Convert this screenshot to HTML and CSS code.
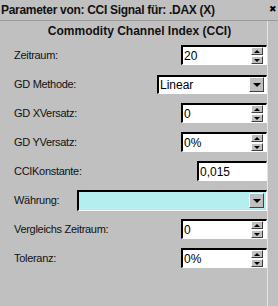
FILE: index.html
```html
<!DOCTYPE html>
<html lang="de">
<head>
  <meta charset="UTF-8">
  <title>Parameter</title>
  <link rel="stylesheet" href="styles.css">
</head>
<body>

  <div class="dialog">
    <div class="titlebar">
      <span class="title">Parameter von: CCI Signal für: .DAX (X)</span>
      <span class="close">&#x2716;</span>
    </div>

    <div class="panel">
      <h1>Commodity Channel Index (CCI)</h1>

      <div class="rows">
        <div class="row">
          <label>Zeitraum:</label>
          <div class="field spin"><span class="value">20</span><span class="spinner"><i class="up"></i><i class="down"></i></span></div>
        </div>
        <div class="row">
          <label>GD Methode:</label>
          <div class="field combo method"><span class="value">Linear</span><span class="drop"><i class="down"></i></span></div>
        </div>
        <div class="row">
          <label>GD XVersatz:</label>
          <div class="field spin"><span class="value">0</span><span class="spinner"><i class="up"></i><i class="down"></i></span></div>
        </div>
        <div class="row">
          <label>GD YVersatz:</label>
          <div class="field spin"><span class="value">0%</span><span class="spinner"><i class="up"></i><i class="down"></i></span></div>
        </div>
        <div class="row">
          <label>CCIKonstante:</label>
          <div class="field text"><span class="value">0,015</span></div>
        </div>
        <div class="row">
          <label>Währung:</label>
          <div class="field combo currency"><span class="value"></span><span class="drop"><i class="down"></i></span></div>
        </div>
        <div class="row">
          <label>Vergleichs Zeitraum:</label>
          <div class="field spin"><span class="value">0</span><span class="spinner"><i class="up"></i><i class="down"></i></span></div>
        </div>
        <div class="row">
          <label>Toleranz:</label>
          <div class="field spin"><span class="value">0%</span><span class="spinner"><i class="up"></i><i class="down"></i></span></div>
        </div>
      </div>
    </div>
  </div>

</body>
</html>
```

FILE: styles.css
```css
body {
  margin: 0;
  background-color: #c0c0c0;
  font-family: 'Liberation Sans', Arial, sans-serif;
  font-size: 11px;
  color: #111;
}
.dialog {
  width: 278px;
  height: 306px;
  overflow: hidden;
}
.titlebar {
  height: 20px;
  display: flex;
  justify-content: space-between;
  align-items: center;
  border-bottom: 1px solid #9a9a9a;
  padding-left: 1px;
}
.title {
  font-weight: bold;
  font-size: 12px;
  letter-spacing: -0.3px;
}
.close {
  font-size: 9px;
  margin-top: -3px;
  margin-right: 1px;
  color: #000;
}
.panel {
  width: 267px;
  border-right: 1px solid #e4e4e4;
  height: 285px;
}
h1 {
  margin: 0;
  height: 24px;
  line-height: 20px;
  font-size: 12px;
  text-align: center;
  padding-left: 12px;
}
.rows {
  display: flex;
  flex-direction: column;
  gap: 9px;
  padding-left: 14px;
}
.row {
  height: 20px;
  display: flex;
  justify-content: space-between;
  align-items: center;
}
label {
  letter-spacing: -0.3px;
}
.field {
  height: 20px;
  box-sizing: border-box;
  border-style: solid;
  border-width: 2px 1px 1px 2px;
  border-color: #000 #fff #fff #000;
  background-color: #fff;
  display: flex;
  align-items: center;
  font-size: 12px;
  color: #000;
}
.value {
  flex: 1;
  padding-left: 1px;
}
.spin { width: 86px; }
.text { width: 70px; }
.method { width: 110px; height: 19px; }
.currency { width: 190px; height: 21px; background-color: #b4eeee; }
.spinner {
  width: 12px;
  margin-right: 3px;
  display: flex;
  flex-direction: column;
  gap: 1px;
}
.spinner i, .drop {
  display: flex;
  align-items: center;
  justify-content: center;
  background-color: #c0c0c0;
  border-style: solid;
  border-width: 1px;
  border-color: #fff #404040 #404040 #fff;
  box-sizing: border-box;
}
.spinner i {
  height: 8px;
}
.spinner i::after, .drop i::after {
  content: "";
  border-left: 3px solid transparent;
  border-right: 3px solid transparent;
}
.spinner .up::after { border-bottom: 3px solid #000; }
.spinner .down::after { border-top: 3px solid #000; }
.drop {
  width: 15px;
  height: 15px;
  margin-right: 2px;
}
.drop i::after {
  display: block;
  border-left-width: 4px;
  border-right-width: 4px;
  border-top: 4px solid #000;
}
```
